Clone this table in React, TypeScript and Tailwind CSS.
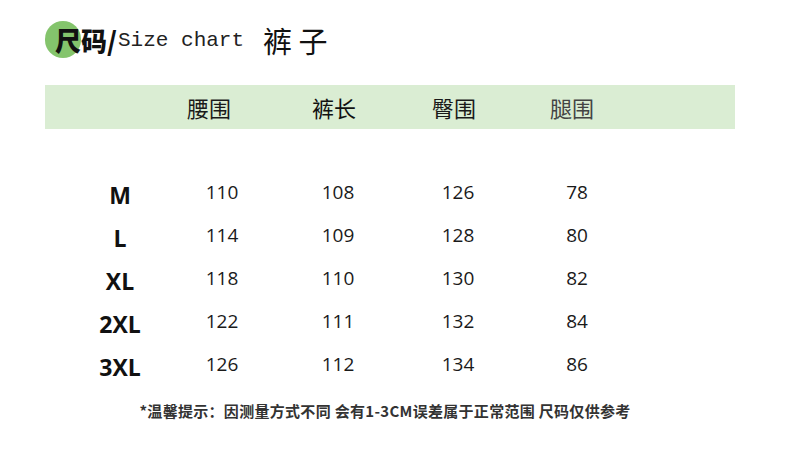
import React from 'react';

// Size chart for trousers
const cjk = "font-['Noto_Sans_CJK_SC',sans-serif]";
const num = "font-['Open_Sans','Noto_Sans_CJK_SC',sans-serif]";

const rows = [
  { size: 'M', values: ['110', '108', '126', '78'] },
  { size: 'L', values: ['114', '109', '128', '80'] },
  { size: 'XL', values: ['118', '110', '130', '82'] },
  { size: '2XL', values: ['122', '111', '132', '84'] },
  { size: '3XL', values: ['126', '112', '134', '86'] },
];

export default function App() {
  return (
    <div className="w-[790px] h-[450px] bg-white overflow-hidden">
      {/* Title */}
      <div className="relative pl-[55px] pt-[21px] h-[85px]">
        <div className="absolute left-[45px] top-[21px] w-[36px] h-[37px] rounded-full bg-[#84c46c]" />
        <div className="relative flex items-center h-[37px]">
          <span className={`${cjk} text-[26px] font-black text-[#111] leading-none`}>尺码/</span>
          <span className="font-['Liberation_Mono',monospace] text-[21px] text-[#222] leading-none ml-[1px] mt-[2px]">
            Size chart
          </span>
          <span className={`${cjk} text-[29px] text-[#111] leading-none ml-[19px] mt-[1px]`}>裤&nbsp;子</span>
        </div>
      </div>

      {/* Header band */}
      <div className="ml-[45px] w-[690px] h-[44px] bg-[#daedd3] grid grid-cols-[142px_125px_120px_118px_1fr] items-center">
        <div />
        <div className={`${cjk} text-[22px] text-[#1a1a1a]`}>腰围</div>
        <div className={`${cjk} text-[22px] text-[#111]`}>裤长</div>
        <div className={`${cjk} text-[22px] text-[#1a1a1a]`}>臀围</div>
        <div className={`${cjk} text-[22px] text-[#444]`}>腿围</div>
      </div>

      {/* Rows */}
      <div className="mt-[42px] pl-[62px]">
        {rows.map(r => (
          <div
            key={r.size}
            className="h-[43px] grid grid-cols-[116px_88px_144px_96px_142px] items-center text-[#1a1a1a]"
          >
            <div className={`${num} text-[23px] font-bold text-center pt-[6px] text-[#111]`}>{r.size}</div>
            {r.values.map((v, i) => (
              <div key={i} className={`${num} text-[19px] text-center`}>
                {v}
              </div>
            ))}
          </div>
        ))}
      </div>

      {/* Footnote */}
      <div className={`${cjk} mt-[14px] text-center text-[15px] font-bold tracking-[0.3px] text-[#333] pr-[20px]`}>
        *温馨提示：因测量方式不同 会有1-3CM误差属于正常范围 尺码仅供参考
      </div>
    </div>
  );
}
